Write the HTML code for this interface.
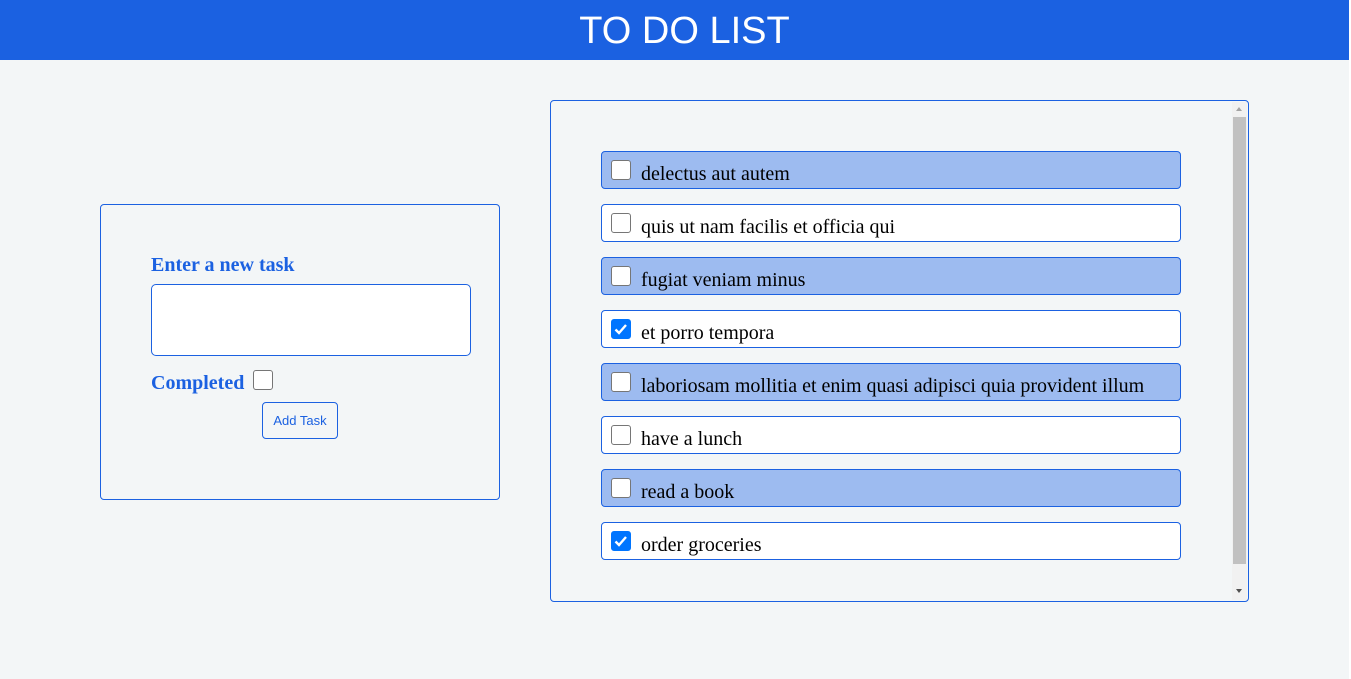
<!DOCTYPE html>
<html><head><style>
*{box-sizing:border-box;margin:0;padding:0}
body{width:1351px;height:679px;background:#f3f6f7;position:relative;overflow:hidden;font-family:"Liberation Serif",serif}
.hdr{position:absolute;left:0;top:0;width:1349px;height:60px;background:#1b61e1;color:#fff;text-align:center;font:38px/62px "Liberation Sans",sans-serif;padding-left:20px}
.edge{position:absolute;left:1349px;top:0;width:2px;height:679px;background:#fff}
.box{position:absolute;border:1px solid #1b61e1;border-radius:4px}
.lbl{position:absolute;color:#1b61e1;font-weight:bold;font-size:20px}
.cb{position:absolute;width:20px;height:20px;border:1px solid #767676;border-radius:3px;background:#fff}
.cb.on{background:#0075ff;border-color:#0075ff}
.item{position:absolute;left:50px;width:580px;height:38px;border:1px solid #1b61e1;border-radius:4px;background:#fff}
.item.b{background:#9dbbf0}
.item .cb{left:9px;top:8px}
.item span{position:absolute;left:39px;top:11px;font-size:20px;color:#000}
</style></head><body>
<div class="hdr">TO DO LIST</div>
<div class="edge"></div>
<div class="box" style="left:100px;top:204px;width:400px;height:296px">
 <div class="lbl" style="left:50px;top:49px">Enter a new task</div>
 <div style="position:absolute;left:50px;top:79px;width:320px;height:72px;border:1px solid #1b61e1;border-radius:5px;background:#fff"></div>
 <div class="lbl" style="left:50px;top:167px">Completed</div>
 <div class="cb" style="left:152px;top:165px"></div>
 <div style="position:absolute;left:161px;top:197px;width:76px;height:37px;border:1px solid #1b61e1;border-radius:4px;color:#1b61e1;font:13px/35px 'Liberation Sans',sans-serif;text-align:center">Add Task</div>
</div>
<div class="box" style="left:550px;top:100px;width:699px;height:502px">
 <div class="item b" style="top:50px"><div class="cb"></div><span>delectus aut autem</span></div>
 <div class="item" style="top:103px"><div class="cb"></div><span>quis ut nam facilis et officia qui</span></div>
 <div class="item b" style="top:156px"><div class="cb"></div><span>fugiat veniam minus</span></div>
 <div class="item" style="top:209px"><div class="cb on"><svg width="18" height="18" viewBox="0 0 18 18"><path d="M3.5 9.5l3.5 3.5 7-8" stroke="#fff" stroke-width="2.4" fill="none"/></svg></div><span>et porro tempora</span></div>
 <div class="item b" style="top:262px"><div class="cb"></div><span>laboriosam mollitia et enim quasi adipisci quia provident illum</span></div>
 <div class="item" style="top:315px"><div class="cb"></div><span>have a lunch</span></div>
 <div class="item b" style="top:368px"><div class="cb"></div><span>read a book</span></div>
 <div class="item" style="top:421px"><div class="cb on"><svg width="18" height="18" viewBox="0 0 18 18"><path d="M3.5 9.5l3.5 3.5 7-8" stroke="#fff" stroke-width="2.4" fill="none"/></svg></div><span>order groceries</span></div>
 <div style="position:absolute;left:681px;top:1px;width:15px;height:498px;background:#f1f1f1"></div>
 <div style="position:absolute;left:682px;top:16px;width:13px;height:447px;background:#c1c1c1"></div>
 <div style="position:absolute;left:685px;top:6px;border:3.5px solid transparent;border-bottom:4px solid #a3a3a3;border-top:0"></div>
 <div style="position:absolute;left:685px;top:488px;border:3.5px solid transparent;border-top:4px solid #505050;border-bottom:0"></div>
</div>
</body></html>
